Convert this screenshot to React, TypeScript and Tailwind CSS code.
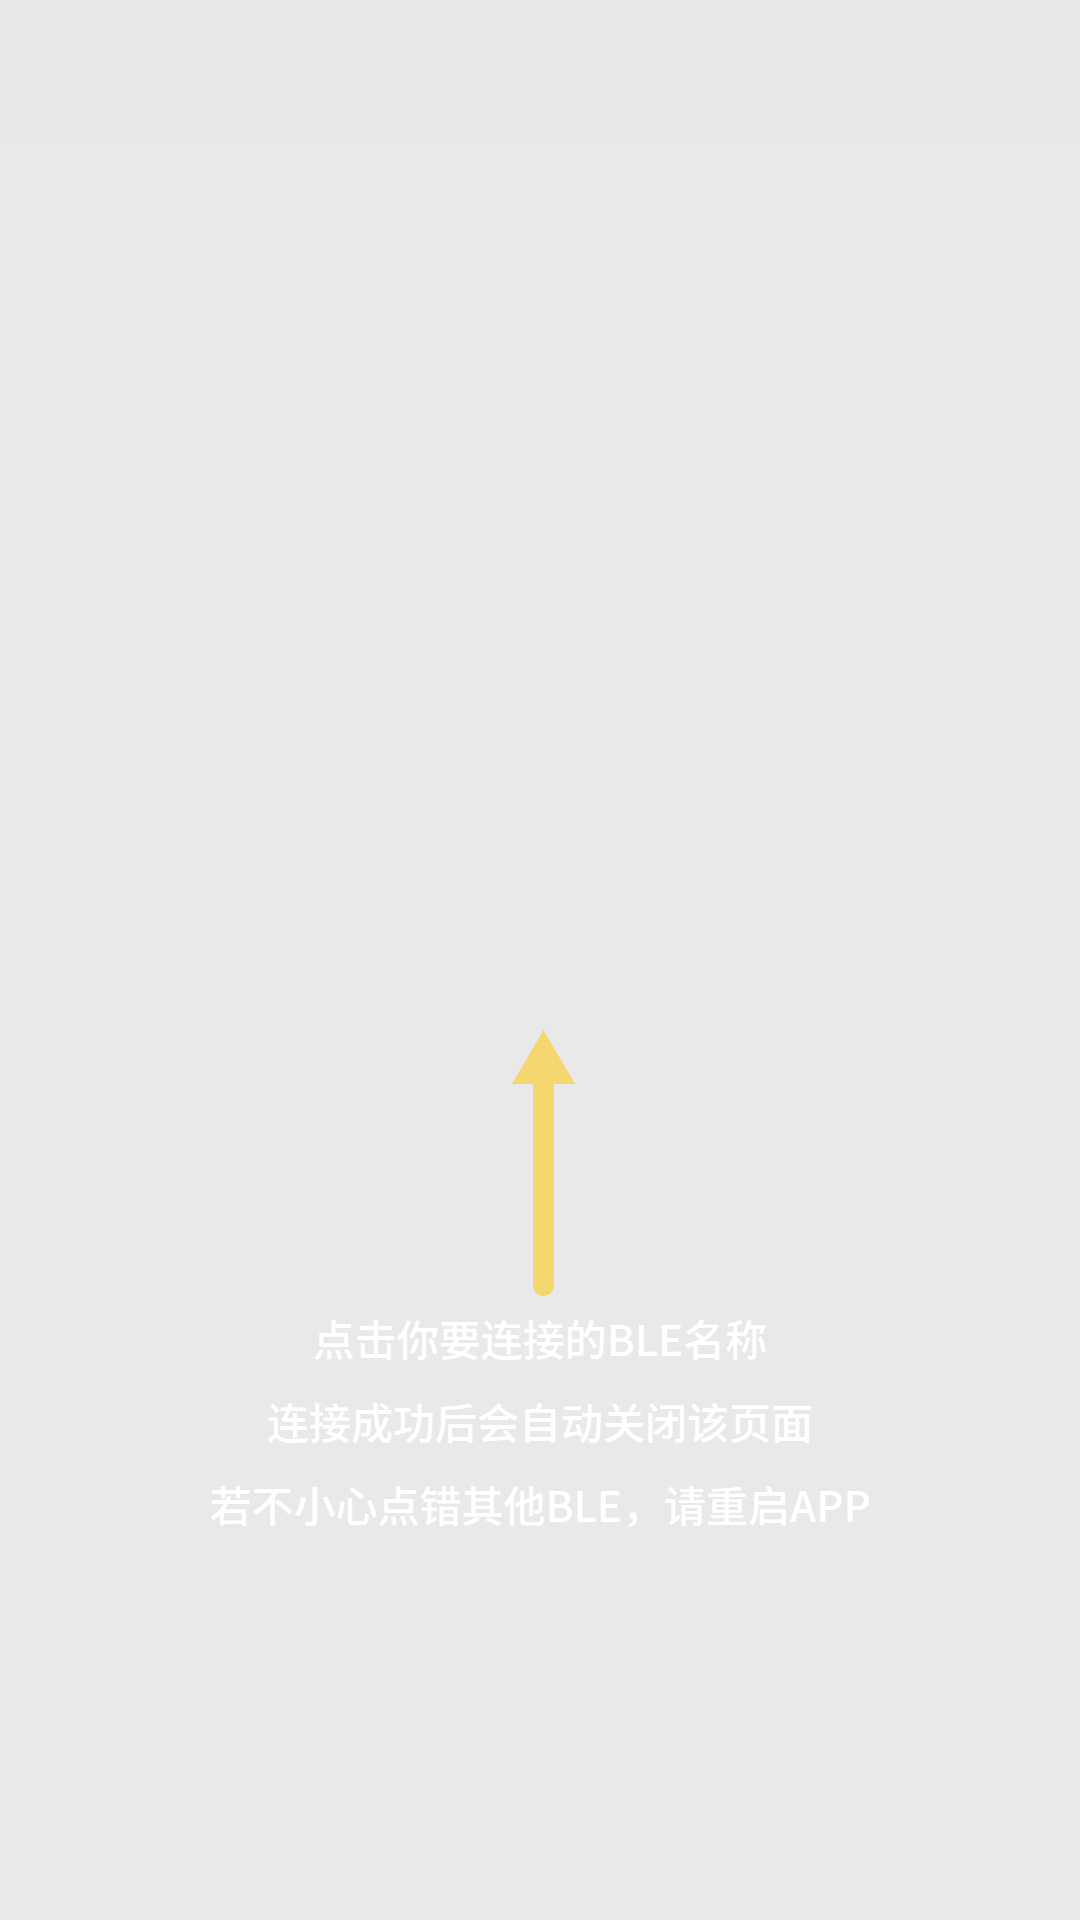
export default function App() {
  return (
    <div className="flex min-h-[1920px] w-[1080px] flex-col bg-[#e9e9e9]">
      {/* Barra superior vazia */}
      <div className="h-[145px] border-b border-[#ececec] bg-[#e8e8e8]" />

      {/* Seta e instruções */}
      <div className="flex flex-col items-center pt-[885px]">
        <svg
          className="ml-[7px]"
          width="63"
          height="266"
          viewBox="0 0 63 266"
        >
          <polygon points="0,54 31.5,0 63,54" fill="#f6d66e" />
          <path
            d="M21 53 H42 V255.5 A10.5 10.5 0 0 1 21 255.5 Z"
            fill="#f6d66e"
          />
        </svg>

        <div
          className="text-center text-[42px] font-medium leading-[83px] text-white"
          style={{ fontFamily: '"Noto Sans CJK SC", "Noto Sans", sans-serif' }}
        >
          <p>点击你要连接的BLE名称</p>
          <p>连接成功后会自动关闭该页面</p>
          <p>若不小心点错其他BLE，请重启APP</p>
        </div>
      </div>
    </div>
  );
}
